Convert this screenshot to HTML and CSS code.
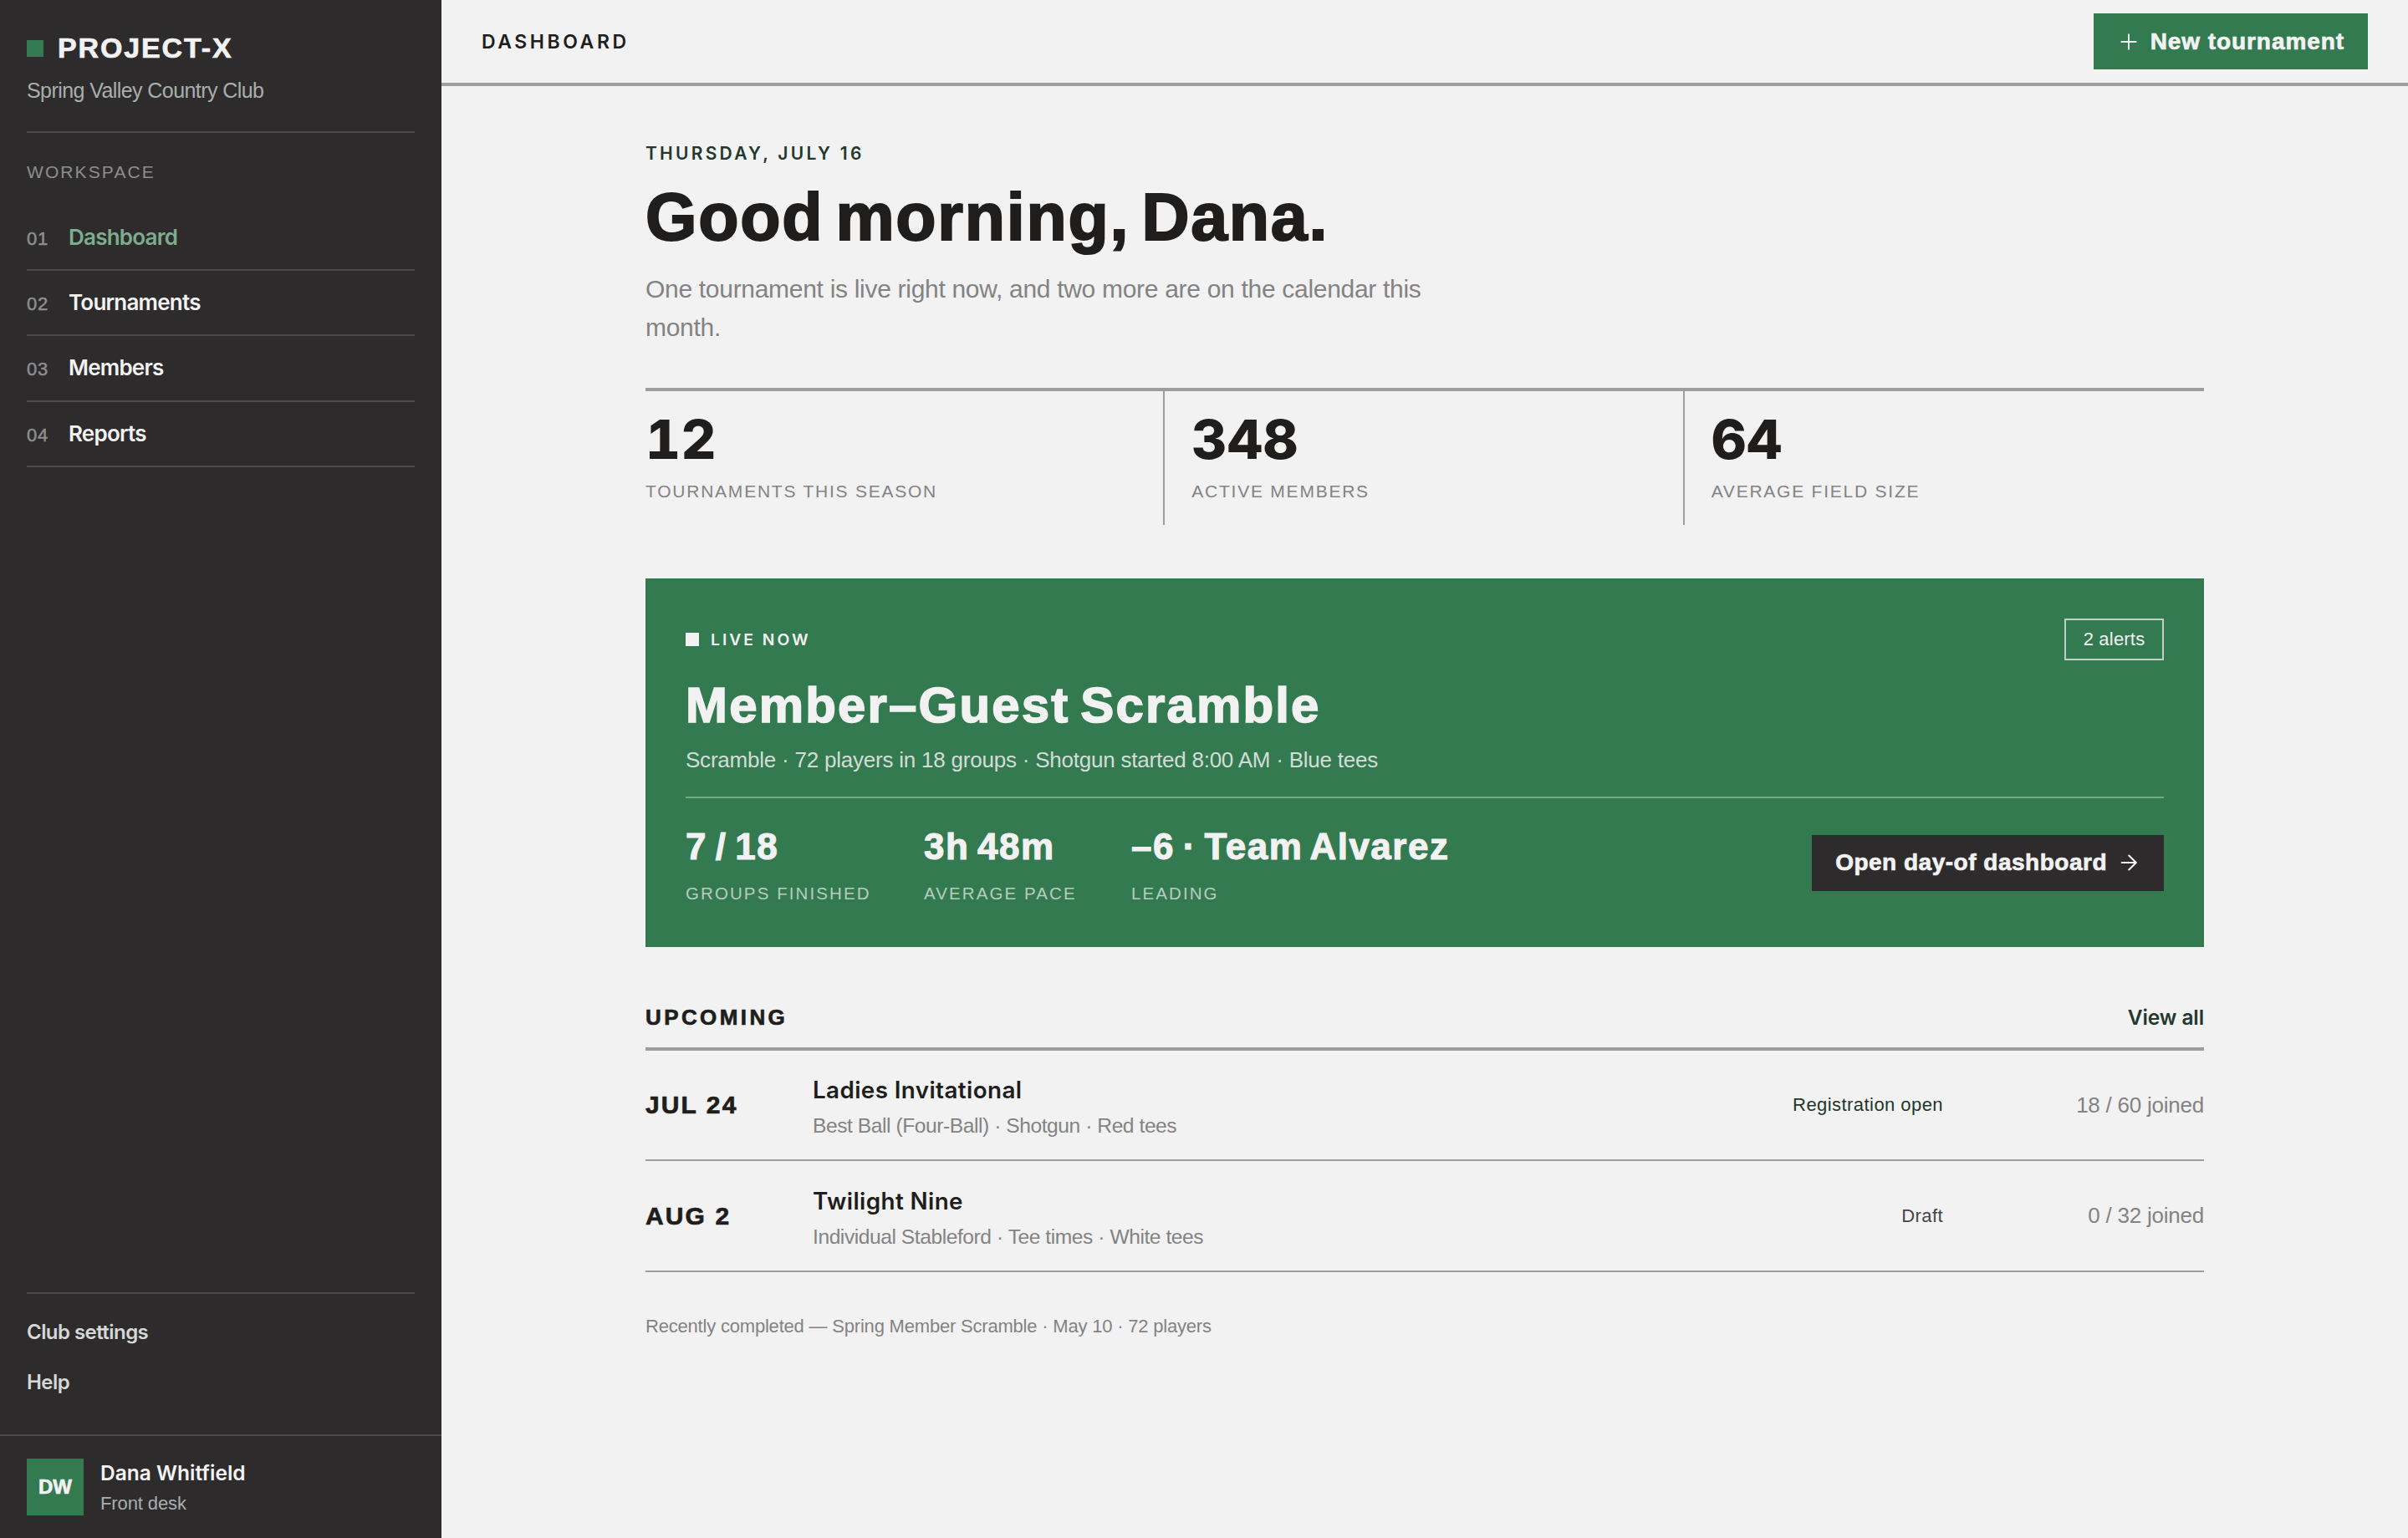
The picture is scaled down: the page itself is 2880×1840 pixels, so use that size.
FILE: index.html
```html
<!DOCTYPE html>
<html lang="en">
<head>
    <meta charset="UTF-8">
    <meta name="viewport" content="width=device-width, initial-scale=1.0">
    <title>Project-X Dashboard</title>
    <link rel="stylesheet" href="styles.css">
</head>
<body>

<aside class="sidebar">
    <div class="sidebar-top">
        <div class="brand">
            <div class="brand-name"><span class="brand-mark"></span>PROJECT-X</div>
            <div class="brand-club">Spring Valley Country Club</div>
        </div>
        <div class="nav-label">WORKSPACE</div>
        <nav class="nav">
            <a class="nav-item active" href="#"><span class="nav-num">01</span>Dashboard</a>
            <a class="nav-item" href="#"><span class="nav-num">02</span>Tournaments</a>
            <a class="nav-item" href="#"><span class="nav-num">03</span>Members</a>
            <a class="nav-item" href="#"><span class="nav-num">04</span>Reports</a>
        </nav>
    </div>

    <div class="sidebar-links">
        <a href="#">Club settings</a>
        <a href="#">Help</a>
    </div>

    <div class="user">
        <div class="avatar">DW</div>
        <div>
            <div class="user-name">Dana Whitfield</div>
            <div class="user-role">Front desk</div>
        </div>
    </div>
</aside>

<main class="main">
    <header class="topbar">
        <div class="page-title">DASHBOARD</div>
        <button class="btn btn-green">
            <svg class="icon" viewBox="0 0 28 28"><path d="M14 5.3v17.4M5.3 14h17.4"/></svg>
            New tournament
        </button>
    </header>

    <div class="content">
        <div class="date">THURSDAY, JULY 16</div>
        <h1 class="greeting">Good morning, Dana.</h1>
        <p class="intro">One tournament is live right now, and two more are on the calendar this month.</p>

        <section class="stats">
            <div class="stat">
                <div class="stat-value">12</div>
                <div class="stat-label">TOURNAMENTS THIS SEASON</div>
            </div>
            <div class="stat">
                <div class="stat-value">348</div>
                <div class="stat-label">ACTIVE MEMBERS</div>
            </div>
            <div class="stat">
                <div class="stat-value">64</div>
                <div class="stat-label">AVERAGE FIELD SIZE</div>
            </div>
        </section>

        <section class="live">
            <div class="live-head">
                <div class="live-tag"><span class="live-mark"></span>LIVE NOW</div>
                <div class="alerts">2 alerts</div>
            </div>
            <h2 class="live-title">Member–Guest Scramble</h2>
            <p class="live-info">Scramble · 72 players in 18 groups · Shotgun started 8:00 AM · Blue tees</p>
            <div class="live-foot">
                <div class="live-stats">
                    <div>
                        <div class="live-value">7 / 18</div>
                        <div class="live-label">GROUPS FINISHED</div>
                    </div>
                    <div>
                        <div class="live-value">3h 48m</div>
                        <div class="live-label">AVERAGE PACE</div>
                    </div>
                    <div>
                        <div class="live-value">–6 · Team Alvarez</div>
                        <div class="live-label">LEADING</div>
                    </div>
                </div>
                <button class="btn btn-dark">
                    Open day-of dashboard
                    <svg class="icon icon-arrow" viewBox="0 0 28 28"><path d="M5.6 14h17.2M14.2 5.5l8.6 8.5-8.6 8.5"/></svg>
                </button>
            </div>
        </section>

        <section class="upcoming">
            <div class="upcoming-head">
                <h3>UPCOMING</h3>
                <a href="#">View all</a>
            </div>
            <div class="event">
                <div class="event-date">JUL 24</div>
                <div class="event-main">
                    <div class="event-name">Ladies Invitational</div>
                    <div class="event-info">Best Ball (Four-Ball) · Shotgun · Red tees</div>
                </div>
                <div class="event-status open">Registration open</div>
                <div class="event-joined">18 / 60 joined</div>
            </div>
            <div class="event">
                <div class="event-date">AUG 2</div>
                <div class="event-main">
                    <div class="event-name">Twilight Nine</div>
                    <div class="event-info">Individual Stableford · Tee times · White tees</div>
                </div>
                <div class="event-status">Draft</div>
                <div class="event-joined">0 / 32 joined</div>
            </div>
        </section>

        <p class="recent">Recently completed — Spring Member Scramble · May 10 · 72 players</p>
    </div>
</main>

</body>
</html>
```

FILE: styles.css
```css
* {
    box-sizing: border-box;
}

body {
    margin: 0;
    height: 1840px;
    display: flex;
    background-color: #f2f2f2;
    color: #1f1e1d;
    font-family: "Liberation Sans", Arial, sans-serif;
    -webkit-font-smoothing: antialiased;
}

h1, h2, h3, p {
    margin: 0;
}

a {
    color: inherit;
    text-decoration: none;
}

/* extra weight for the heavy text */
.brand-name, .btn, .avatar, .upcoming-head h3, .event-date {
    -webkit-text-stroke: 0.7px currentColor;
}

/* semibold text */
.nav-item, .sidebar-links, .user-name, .page-title, .date,
.live-tag, .upcoming-head a, .event-name {
    font-family: Inter, "Liberation Sans", sans-serif;
    font-weight: 600;
}

/* Sidebar */
.sidebar {
    width: 528px;
    flex-shrink: 0;
    display: flex;
    flex-direction: column;
    background-color: #2d2b2c;
    color: #f2f2f2;
}

.sidebar-top {
    padding: 32px 32px 0;
    margin-bottom: auto;
}

.brand {
    padding-bottom: 30px;
    border-bottom: 2px solid #4b4a4b;
}

.brand-name {
    display: flex;
    align-items: center;
    gap: 17px;
    font-size: 34px;
    font-weight: 700;
    line-height: 51px;
    letter-spacing: 0.055em;
}

.brand-mark {
    width: 20px;
    height: 20px;
    background-color: #347a50;
}

.brand-club {
    margin-top: 7px;
    font-size: 25px;
    line-height: 37px;
    letter-spacing: -0.023em;
    color: #a9afac;
}

.nav-label {
    margin: 32px 0 24.5px;
    font-size: 21px;
    line-height: 30px;
    letter-spacing: 0.1em;
    color: #8e8e8e;
}

.nav-item {
    display: flex;
    align-items: baseline;
    gap: 24px;
    height: 78.4px;
    border-bottom: 2px solid #4b4a4b;
    font-size: 26px;
    line-height: 76px;
    letter-spacing: -0.03em;
}

.nav-item.active {
    color: #7dac8e;
}

.nav-num {
    width: 26px;
    font-family: "Liberation Sans", Arial, sans-serif;
    font-size: 22px;
    font-weight: 400;
    letter-spacing: 0.03em;
    color: #8e8e8e;
    -webkit-text-stroke: 0.5px currentColor;
}

.sidebar-links {
    margin: 0 32px;
    padding: 16px 0 32px;
    display: flex;
    flex-direction: column;
    border-top: 2px solid #4b4a4b;
    font-size: 24px;
    line-height: 60px;
    letter-spacing: -0.023em;
    color: #d5d8d6;
}

.user {
    height: 124px;
    padding: 0 32px;
    display: flex;
    align-items: center;
    gap: 20px;
    border-top: 2px solid #4b4a4b;
}

.avatar {
    width: 68px;
    height: 68px;
    background-color: #347a50;
    font-size: 24px;
    font-weight: 700;
    line-height: 68px;
    text-align: center;
}

.user-name {
    padding-top: 2px;
    font-size: 24.5px;
    line-height: 36px;
}

.user-role {
    padding-top: 1px;
    font-size: 22px;
    line-height: 36px;
    letter-spacing: -0.005em;
    color: #a9afac;
}

/* Top bar */
.main {
    flex: 1;
}

.topbar {
    height: 103px;
    padding: 0 48px;
    display: flex;
    align-items: center;
    justify-content: space-between;
    border-bottom: 4px solid #9d9d9d;
}

.page-title {
    font-size: 23px;
    letter-spacing: 0.155em;
}

.btn {
    height: 67px;
    padding: 0 28px;
    display: flex;
    align-items: center;
    gap: 12px;
    border: none;
    color: #f2f2f2;
    font-family: inherit;
    font-size: 28px;
    font-weight: 700;
    letter-spacing: 0.033em;
}

.btn-green {
    background-color: #347a50;
}

.btn-dark {
    background-color: #2d2b2c;
    letter-spacing: 0.018em;
}

.icon {
    width: 28px;
    height: 28px;
    fill: none;
    stroke: #f2f2f2;
    stroke-width: 1.9;
    stroke-linecap: round;
    stroke-linejoin: round;
}

.icon-arrow {
    stroke-width: 2.1;
}

/* Content */
.content {
    width: 1864px;
    margin: 0 auto;
    padding-top: 65px;
}

.date {
    font-size: 21px;
    line-height: 32px;
    letter-spacing: 0.155em;
    color: #22382c;
}

.greeting {
    margin-top: 18px;
    font-size: 79px;
    font-weight: 700;
    line-height: 84px;
    letter-spacing: 0.022em;
    word-spacing: -0.12em;
    -webkit-text-stroke: 2px currentColor;
}

.intro {
    width: 960px;
    margin-top: 21px;
    font-size: 30px;
    line-height: 46px;
    letter-spacing: -0.01em;
    color: #838383;
}

.stats {
    margin-top: 49px;
    display: grid;
    grid-template-columns: repeat(3, 1fr);
    border-top: 4px solid #9d9d9d;
}

.stat {
    height: 160px;
    padding: 24px 0 0 32px;
    border-right: 2px solid #9d9d9d;
}

.stat:first-child {
    padding-left: 0;
}

.stat:last-child {
    border-right: none;
}

.stat-value {
    font-family: Inter, sans-serif;
    font-size: 65px;
    font-weight: 800;
    line-height: 68px;
    letter-spacing: 0.01em;
    font-variant-numeric: tabular-nums;
}

.stat-label {
    margin-top: 13px;
    font-size: 21px;
    line-height: 30px;
    letter-spacing: 0.084em;
    color: #838383;
}

/* Live tournament */
.live {
    height: 441px;
    margin-top: 64px;
    padding: 48px;
    background-color: #347a50;
    color: #f2f2f2;
}

.live-head {
    display: flex;
    align-items: center;
    justify-content: space-between;
}

.live-tag {
    display: flex;
    align-items: center;
    gap: 14px;
    font-size: 19.3px;
    letter-spacing: 0.155em;
}

.live-mark {
    width: 16px;
    height: 16px;
    background-color: #f2f2f2;
}

.alerts {
    width: 119px;
    height: 50px;
    border: 2px solid #c1cfc7;
    font-size: 22px;
    line-height: 46px;
    letter-spacing: 0.009em;
    text-align: center;
}

.live-title {
    margin-top: 22px;
    font-size: 60px;
    font-weight: 700;
    line-height: 64px;
    letter-spacing: 0.036em;
    word-spacing: -0.1em;
    -webkit-text-stroke: 1.6px currentColor;
}

.live-info {
    margin-top: 14px;
    padding-bottom: 25px;
    border-bottom: 2px solid #77a688;
    font-size: 26px;
    line-height: 38px;
    letter-spacing: -0.0085em;
    color: #d3ddd7;
}

.live-foot {
    padding-top: 25px;
    display: flex;
    align-items: center;
    justify-content: space-between;
}

.live-stats {
    display: grid;
    grid-template-columns: 285px 248px auto;
}

.live-value {
    font-size: 44px;
    font-weight: 700;
    line-height: 66px;
    letter-spacing: 0.034em;
    word-spacing: -0.09em;
    -webkit-text-stroke: 1.1px currentColor;
}

.live-label {
    margin-top: 8px;
    font-size: 20.5px;
    line-height: 30px;
    letter-spacing: 0.102em;
    color: #b8ccbf;
}

/* Upcoming */
.upcoming {
    margin-top: 64px;
}

.upcoming-head {
    display: flex;
    justify-content: space-between;
    padding-bottom: 16px;
    border-bottom: 4px solid #9d9d9d;
    font-size: 24.5px;
    line-height: 40px;
}

.upcoming-head h3 {
    font-size: 26px;
    font-weight: 700;
    letter-spacing: 0.131em;
}

.upcoming-head a {
    letter-spacing: -0.004em;
    color: #22382c;
}

.event {
    height: 132px;
    display: grid;
    grid-template-columns: 168px 1fr 240px 280px;
    gap: 32px;
    align-items: center;
    border-bottom: 2px solid #9d9d9d;
}

.event + .event {
    height: 133px;
}

.event-date {
    font-size: 30px;
    font-weight: 700;
    letter-spacing: 0.07em;
}

.event-main {
    padding-top: 3px;
}

.event-name {
    font-size: 27.8px;
    line-height: 46px;
    letter-spacing: 0.014em;
}

.event-info {
    margin-top: 1px;
    font-size: 24.6px;
    line-height: 38px;
    letter-spacing: -0.018em;
    color: #838383;
}

.event-status {
    font-size: 22px;
    letter-spacing: 0.02em;
    text-align: right;
    color: #454545;
}

.event-status.open {
    color: #22382c;
}

.event-joined {
    font-size: 26px;
    letter-spacing: -0.009em;
    text-align: right;
    color: #838383;
}

.recent {
    margin-top: 48px;
    font-size: 22px;
    line-height: 33px;
    letter-spacing: -0.009em;
    color: #838383;
}
```
